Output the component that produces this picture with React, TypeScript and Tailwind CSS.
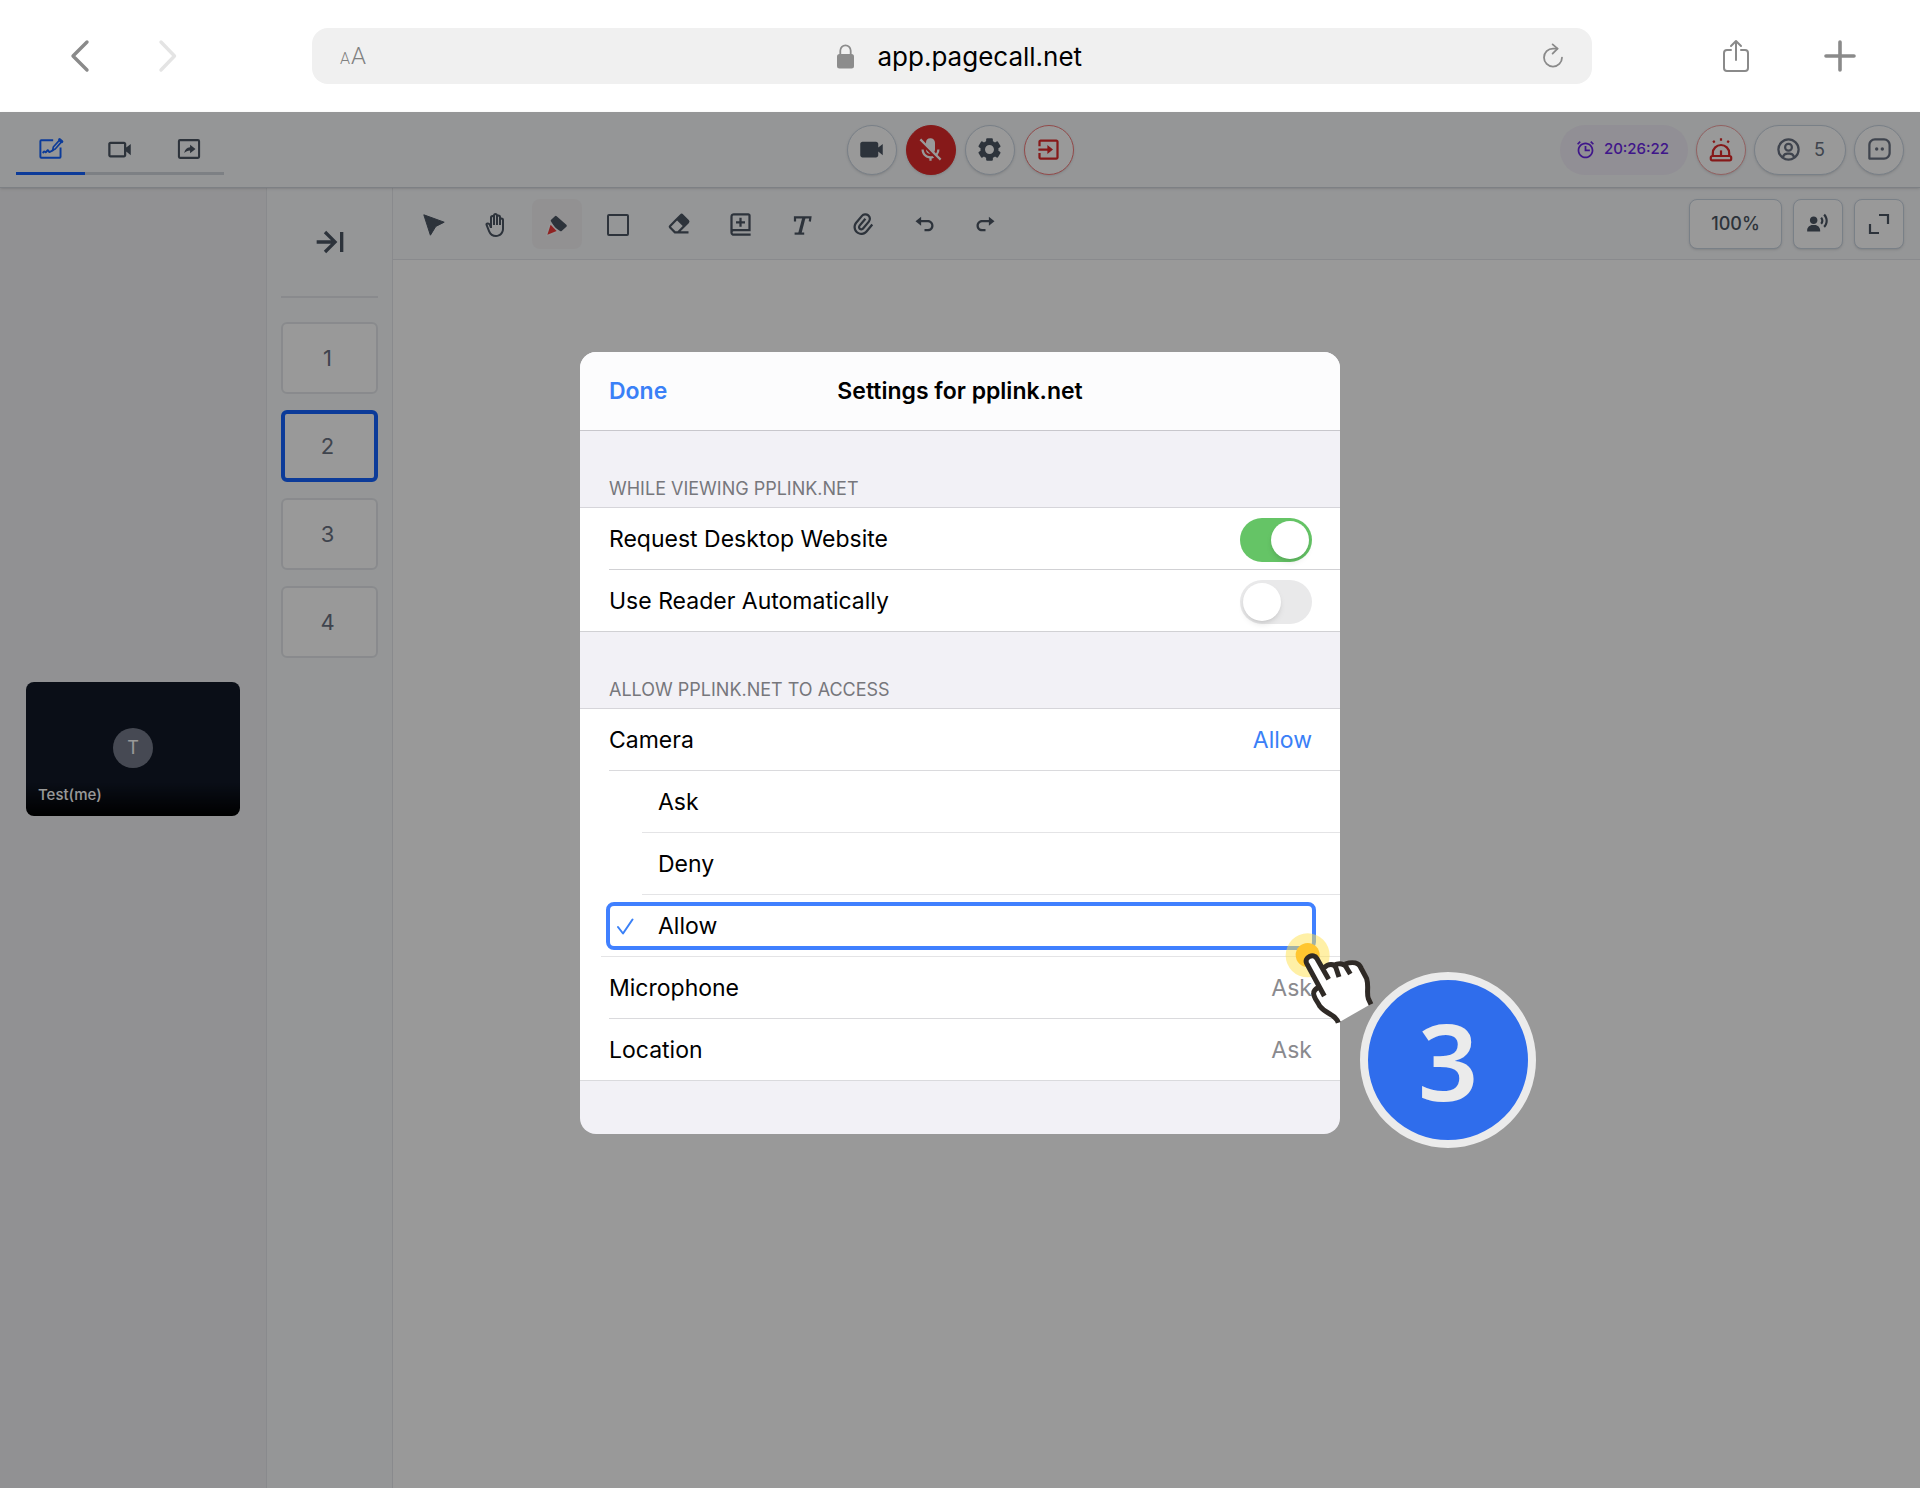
import type { ReactNode } from "react";
import { useState } from "react";
import clsx from "clsx";
import {
  BiAlarm,
  BiArrowToRight,
  BiBookAdd,
  BiExit,
  BiMessageSquareDots,
  BiPaperclip,
  BiRedo,
  BiSolidCog,
  BiSolidEraser,
  BiSolidMicrophoneOff,
  BiSolidUserVoice,
  BiSolidVideo,
  BiUndo,
  BiUserCircle,
  BiVideo,
} from "react-icons/bi";
import { MdOutlineBackHand } from "react-icons/md";

/* ---------- icons ---------- */

function WhiteboardIcon() {
  return (
    <svg width="26" height="26" viewBox="0 0 24 24" fill="none" stroke="currentColor" strokeWidth="1.8" strokeLinejoin="round">
      <path d="M14 4H3a.8.8 0 0 0-.8.8v14.4c0 .4.4.8.8.8h17c.4 0 .8-.4.8-.8V10.500" />
      <path d="M13.500 13.200l.6-3 5.800-6.400 1.800 1.600-5.800 6.600z" strokeWidth="1.5" />
      <path d="M19.900 3.200l2.200 2" strokeWidth="2.6" strokeLinecap="round" />
      <path d="M4.800 15.200c1.200-2.600 1.900.9 2.900-.6s1.600-2.200 2.100-.5c.4 1.400 1.600.4 3.800-.8" strokeLinecap="round" />
    </svg>
  );
}

function ShareScreenIcon() {
  return (
    <svg width="26" height="26" viewBox="0 0 24 24">
      <rect x="2.7" y="3.8" width="18.6" height="16.4" rx="1" fill="none" stroke="currentColor" strokeWidth="1.9" />
      <path d="M13 8l5 4-5 4v-2.600c-2.300 0-3.900.8-5.400 2.400.5-3.100 2.300-5 5.400-5.400z" fill="currentColor" />
    </svg>
  );
}

function CursorIcon() {
  return (
    <svg width="24" height="24" viewBox="0 0 24 24" fill="currentColor" stroke="currentColor" strokeLinejoin="round">
      <path d="M1.8 1.8l20.4 7.400-8.400 4.200-5.400 8.800z" />
    </svg>
  );
}

function PenIcon() {
  return (
    <svg width="24" height="24" viewBox="0 0 24 24">
      <path d="M7 7.600l3.800-3.400 9.700 8.600-4.700 4.200-5-3.400z" fill="currentColor" stroke="currentColor" strokeWidth="2.6" strokeLinejoin="round" />
      <path d="M5.600 11.800l6 6.200-9.200 3.800z" fill="#ef3a3a" stroke="#f8f9fa" strokeWidth="3" paintOrder="stroke" strokeLinejoin="round" />
    </svg>
  );
}

function RectIcon() {
  return (
    <svg width="24" height="24" viewBox="0 0 24 24" fill="none" stroke="currentColor" strokeWidth="2">
      <rect x="2" y="2" width="20" height="20" rx="1" />
    </svg>
  );
}

function TextIcon() {
  return (
    <svg width="24" height="24" viewBox="0 0 24 24" fill="none" stroke="currentColor">
      <path d="M5 8.500V4.400h15.400l-.6 4.100" strokeWidth="2.2" />
      <path d="M14 4.400L9.800 20.500" strokeWidth="3.2" />
      <path d="M4.600 20.600h9.600" strokeWidth="2.2" />
    </svg>
  );
}

function SirenIcon() {
  return (
    <svg width="26" height="26" viewBox="0 0 26 26" fill="none" stroke="currentColor" strokeWidth="2.2" strokeLinejoin="round">
      <rect x="2.8" y="19" width="20.4" height="4.4" rx="1.6" />
      <path d="M4.800 18.600v-2.400a8.200 8.200 0 0 1 16.400 0v2.400" />
      <path d="M13 13.400v4.600" />
      <path d="M13 1.200v2.600M5.200 3.800l1.400 1.800M20.800 3.800l-1.400 1.800" />
    </svg>
  );
}

function CornersIcon() {
  return (
    <svg width="24" height="24" viewBox="0 0 24 24" fill="none" stroke="currentColor" strokeWidth="2.2">
      <path d="M12 3h9v9M3 12v9h9" />
    </svg>
  );
}

function ChevronIcon({ flip }: { flip?: boolean }) {
  return (
    <svg width="32" height="36" viewBox="0 0 32 36" fill="none" stroke="currentColor" strokeWidth="3.4" strokeLinecap="round" strokeLinejoin="round">
      {flip ? <path d="M9 4l13.500 14L9 32" /> : <path d="M23 4L9 18l14 14" />}
    </svg>
  );
}

function LockIcon() {
  return (
    <svg width="17" height="25" viewBox="0 0 17 25">
      <rect y="10" width="17" height="14.5" rx="2.5" fill="#8c8c8c" />
      <path d="M3.300 11V6.800a5.200 5.400 0 0 1 10.400 0V11" fill="none" stroke="#8c8c8c" strokeWidth="1.8" />
    </svg>
  );
}

function ReloadIcon() {
  return (
    <svg width="22" height="26" viewBox="0 0 22 26" fill="none" stroke="currentColor" strokeWidth="1.8" strokeLinecap="round" strokeLinejoin="round">
      <path d="M20 14.600a9 9 0 1 1-9-9h4.400" />
      <path d="M10.600 1.400l5 4.200-5 5" />
    </svg>
  );
}

function ShareIcon() {
  return (
    <svg width="32" height="36" viewBox="0 0 32 36" fill="none" stroke="currentColor" strokeWidth="2" strokeLinecap="round" strokeLinejoin="round">
      <path d="M11 12H7a3 3 0 0 0-3 3v15a3 3 0 0 0 3 3h18a3 3 0 0 0 3-3V15a3 3 0 0 0-3-3h-4" />
      <path d="M16 22V3.500M11 8l5-5 5 5" />
    </svg>
  );
}

function PlusIcon() {
  return (
    <svg width="32" height="32" viewBox="0 0 32 32" stroke="currentColor" strokeWidth="3.6" strokeLinecap="round">
      <path d="M16 2v28M2 16h28" />
    </svg>
  );
}

function CheckIcon() {
  return (
    <svg width="17" height="17" viewBox="0 0 17 17" fill="none" stroke="#3a80f7" strokeWidth="2" strokeLinecap="round" strokeLinejoin="round">
      <path d="M1 9l5 6.500L15.500 1.500" />
    </svg>
  );
}

function TapPointer() {
  return (
    <svg width="93" height="97" viewBox="160 150 279 291" fill="none">
      <circle cx="234" cy="226" r="66" fill="#ffe14d" fillOpacity="0.5" />
      <circle cx="234" cy="225" r="36" fill="#ffc62f" />
      <path
        d="M326 428C318 402 290 402 270 378C262 362 250 345 262 325L231 252C222 232 252 218 262 236L284 263C312 245 350 245 390 252L412 298C418 318 408 340 416 356L424 372Z"
        fill="#fff"
      />
      <path
        d="M326 428C318 402 290 404 270 378C262 362 250 350 252 338C253 330 260 326 266 322M284 348L231 250C222 232 252 218 262 236L297 298M284 263C296 250 314 250 319 264L328 291M312 256C328 248 346 250 351 264L362 282M346 252C370 244 388 248 394 264L411 296C418 318 410 340 416 356L424 373"
        stroke="#2f2a26"
        strokeWidth="15"
        strokeLinejoin="round"
      />
    </svg>
  );
}

/* ---------- browser chrome ---------- */

function BrowserBar() {
  return (
    <header className="flex h-28 items-center bg-white px-16 text-[#8a8a8a]">
      <div className="mr-32 flex gap-14">
        <button aria-label="Back"><ChevronIcon /></button>
        <button aria-label="Forward" className="text-[#e4e4e4]"><ChevronIcon flip /></button>
      </div>
      <div className="flex h-14 flex-1 items-center justify-between rounded-2xl bg-[#f0f0f0] px-7">
        <button aria-label="Page settings" className="flex w-10 items-baseline gap-px font-['Roboto',sans-serif] font-light text-[#808080]">
          <span className="text-base">A</span>
          <span className="text-2xl">A</span>
        </button>
        <label className="flex items-center gap-6">
          <LockIcon />
          <input
            aria-label="Address"
            defaultValue="app.pagecall.net"
            className="w-52 bg-transparent text-[26px] text-black outline-none"
          />
        </label>
        <button aria-label="Reload"><ReloadIcon /></button>
      </div>
      <div className="ml-32 flex items-center gap-18">
        <button aria-label="Share"><ShareIcon /></button>
        <button aria-label="New tab"><PlusIcon /></button>
      </div>
    </header>
  );
}

/* ---------- pagecall room ---------- */

const roundButton = "flex size-[50px] items-center justify-center rounded-full border shadow-sm";

function RoomHeader() {
  const tabs = [
    { label: "Whiteboard", icon: <WhiteboardIcon />, active: true },
    { label: "Video", icon: <BiVideo size={27} /> },
    { label: "Screen share", icon: <ShareScreenIcon /> },
  ];

  return (
    <div className="z-10 grid h-19 grid-cols-[1fr_auto_1fr] items-center border-b border-gray-300 bg-slate-50 px-4 shadow-sm">
      <nav className="flex h-[50px] w-52">
        {tabs.map((tab) => (
          <button
            key={tab.label}
            aria-label={tab.label}
            className={clsx(
              "flex flex-1 items-center justify-center border-b-[3px] pt-0.5",
              tab.active ? "border-[#1463ff] text-[#1463ff]" : "border-gray-300 text-[#4b5563]"
            )}
          >
            {tab.icon}
          </button>
        ))}
      </nav>
      <div className="flex gap-[9px]">
        <button aria-label="Camera" className={clsx(roundButton, "border-slate-300 bg-white text-[#4b5563]")}>
          <BiSolidVideo size={27} />
        </button>
        <button aria-label="Unmute" className={clsx(roundButton, "border-[#e02b2b] bg-[#e02b2b] text-white")}>
          <BiSolidMicrophoneOff size={27} />
        </button>
        <button aria-label="Settings" className={clsx(roundButton, "border-slate-300 bg-white text-[#4b5563]")}>
          <BiSolidCog size={27} />
        </button>
        <button aria-label="Leave" className={clsx(roundButton, "border-[#f47c7c] bg-white text-[#e02b2b]")}>
          <BiExit size={27} />
        </button>
      </div>
      <div className="flex items-center justify-end gap-2">
        <div className="flex h-[50px] w-32 items-center justify-center gap-2 rounded-full bg-[#f2eef8] pr-1 text-[15px] font-medium text-[#6a26e6]">
          <BiAlarm size={21} />
          20:26:22
        </div>
        <button aria-label="Emergency" className={clsx(roundButton, "border-[#f4a3a3] bg-white text-[#e02b2b]")}>
          <SirenIcon />
        </button>
        <button
          aria-label="Participants"
          className="flex h-[50px] w-23 items-center justify-center gap-3 rounded-full border border-slate-300 bg-white text-lg text-gray-500 shadow-sm"
        >
          <BiUserCircle size={27} />5
        </button>
        <button aria-label="Chat" className={clsx(roundButton, "border-slate-300 bg-white text-gray-500")}>
          <BiMessageSquareDots size={27} />
        </button>
      </div>
    </div>
  );
}

function VideoSidebar() {
  return (
    <aside className="w-[267px] border-r border-gray-200 bg-[#f2f2f5] px-[26px] pt-[494px]">
      <div className="flex h-[134px] flex-col justify-end rounded-lg bg-[#111827] bg-linear-to-t from-black to-transparent to-25%">
        <div className="mx-auto flex size-10 items-center justify-center rounded-full bg-[#757b8a] text-lg text-white">
          T
        </div>
        <div className="px-3 pt-4 pb-2.5 text-[15px] font-medium text-white">Test(me)</div>
      </div>
    </aside>
  );
}

function PageList() {
  const [current, setCurrent] = useState(2);

  return (
    <aside className="w-[126px] border-r border-gray-200 bg-slate-50 px-3.5">
      <div className="mb-6 flex h-[110px] items-center justify-center border-b-2 border-gray-200 text-[#4b5563]">
        <button aria-label="Collapse pages"><BiArrowToRight size={40} /></button>
      </div>
      <div className="flex flex-col gap-4">
        {[1, 2, 3, 4].map((page) => (
          <button
            key={page}
            onClick={() => setCurrent(page)}
            className={clsx(
              "h-18 rounded-md bg-white pr-1 text-[22px] text-gray-500",
              page === current ? "border-4 border-[#1463ff]" : "border-2 border-gray-200"
            )}
          >
            {page}
          </button>
        ))}
      </div>
    </aside>
  );
}

function Toolbar() {
  const tools = [
    { label: "Select", icon: <CursorIcon /> },
    { label: "Pan", icon: <MdOutlineBackHand size={24} /> },
    { label: "Pen", icon: <PenIcon />, active: true },
    { label: "Shape", icon: <RectIcon /> },
    { label: "Eraser", icon: <BiSolidEraser size={27} /> },
    { label: "Add page", icon: <BiBookAdd size={27} /> },
    { label: "Text", icon: <TextIcon /> },
    { label: "Attach", icon: <BiPaperclip size={27} className="-rotate-50" /> },
    { label: "Undo", icon: <BiUndo size={27} /> },
    { label: "Redo", icon: <BiRedo size={27} /> },
  ];
  const boxButton = "flex h-[50px] items-center justify-center rounded-lg border border-slate-300 bg-white shadow-sm";

  return (
    <div className="flex h-18 items-center justify-between border-b border-gray-200 bg-slate-50 pr-4 pl-4 text-[#4b5563]">
      <div className="flex w-[602px] justify-between">
        {tools.map((tool) => (
          <button
            key={tool.label}
            aria-label={tool.label}
            className={clsx("flex size-[50px] items-center justify-center rounded-lg pt-0.5", tool.active && "bg-[#f4f2f4]")}
          >
            {tool.icon}
          </button>
        ))}
      </div>
      <div className="flex gap-[11px]">
        <button className={clsx(boxButton, "w-[93px] text-lg font-medium")}>100%</button>
        <button aria-label="Presenter" className={clsx(boxButton, "w-[50px]")}><BiSolidUserVoice size={26} /></button>
        <button aria-label="Fullscreen" className={clsx(boxButton, "w-[50px]")}><CornersIcon /></button>
      </div>
    </div>
  );
}

/* ---------- site settings dialog ---------- */

function GroupLabel({ children }: { children: ReactNode }) {
  return (
    <h3 className="flex h-[77px] items-end border-b border-[#d6d5da] px-[29px] pb-1 text-lg text-[#77777c]">{children}</h3>
  );
}

function ToggleRow({ label, on, last }: { label: string; on: boolean; last?: boolean }) {
  return (
    <label className={clsx("flex h-[62px] items-center justify-between border-b border-[#d1d1d4] pt-0.5 pr-7", last ? "pl-[29px]" : "ml-[29px]")}>
      {label}
      <input type="checkbox" role="switch" defaultChecked={on} className="peer sr-only" />
      <span className="flex h-11 w-18 items-center rounded-full bg-[#e9e9ea] p-[3px] peer-checked:justify-end peer-checked:bg-[#65c466]">
        <span className="size-[38px] rounded-full bg-white shadow-md" />
      </span>
    </label>
  );
}

function AccessRow({ label, value, accent, last }: { label: string; value: string; accent?: boolean; last?: boolean }) {
  return (
    <button className={clsx("flex h-[62px] items-center justify-between border-b border-[#dadadd] pt-0.5 pr-7", last ? "pl-[29px]" : "ml-[29px]")}>
      {label}
      <span className={accent ? "text-[#3a80f7]" : "text-[#8a8a8e]"}>{value}</span>
    </button>
  );
}

function SettingsDialog() {
  return (
    <div role="dialog" aria-labelledby="settings-title" className="relative w-[760px] rounded-2xl bg-[#f2f1f6] text-[23px] text-black">
      <div className="grid h-[79px] grid-cols-[1fr_auto_1fr] items-center rounded-t-2xl border-b border-[#c8c7cc] bg-[#fcfcfd] px-[29px] font-semibold">
        <button className="justify-self-start text-[#3a80f7]">Done</button>
        <h2 id="settings-title">Settings for pplink.net</h2>
      </div>

      <GroupLabel>WHILE VIEWING PPLINK.NET</GroupLabel>
      <div className="bg-white">
        <ToggleRow label="Request Desktop Website" on />
        <ToggleRow label="Use Reader Automatically" on={false} last />
      </div>

      <GroupLabel>ALLOW PPLINK.NET TO ACCESS</GroupLabel>
      <div className="flex flex-col bg-white">
        <AccessRow label="Camera" value="Allow" accent />
        <button className="ml-[62px] h-[62px] border-b border-[#e4e4e6] pt-0.5 pl-4 text-left">Ask</button>
        <button className="ml-[62px] h-[62px] border-b border-[#e4e4e6] pt-0.5 pl-4 text-left">Deny</button>
        <div className="ml-[21px] flex h-[62px] items-center border-b border-[#e4e4e6] pr-6 pl-[5px]">
          <button className="flex h-12 flex-1 items-center gap-6 rounded-lg border-4 border-[#4080ff] pt-0.5 pl-[7px]">
            <CheckIcon />
            Allow
          </button>
        </div>
        <AccessRow label="Microphone" value="Ask" />
        <AccessRow label="Location" value="Ask" last />
      </div>
      <div className="h-[53px]" />

      <div className="pointer-events-none absolute top-[578px] -right-9">
        <TapPointer />
      </div>
      <div className="absolute top-[620px] left-[780px] flex size-44 items-center justify-center rounded-full border-8 border-[#ebebeb] bg-[#2f6dec] font-['Noto_Sans',sans-serif] text-[106px] leading-none font-semibold text-[#ebebeb]">
        3
      </div>
    </div>
  );
}

export default function App() {
  return (
    <div className="flex min-h-screen flex-col bg-white font-['Inter',sans-serif]">
      <BrowserBar />
      <div className="relative flex flex-1 flex-col">
        <RoomHeader />
        <div className="flex flex-1">
          <VideoSidebar />
          <PageList />
          <main className="flex-1 bg-white">
            <Toolbar />
          </main>
        </div>
        <div className="absolute inset-0 z-20 flex items-start justify-center bg-black/40 pt-60">
          <SettingsDialog />
        </div>
      </div>
    </div>
  );
}
